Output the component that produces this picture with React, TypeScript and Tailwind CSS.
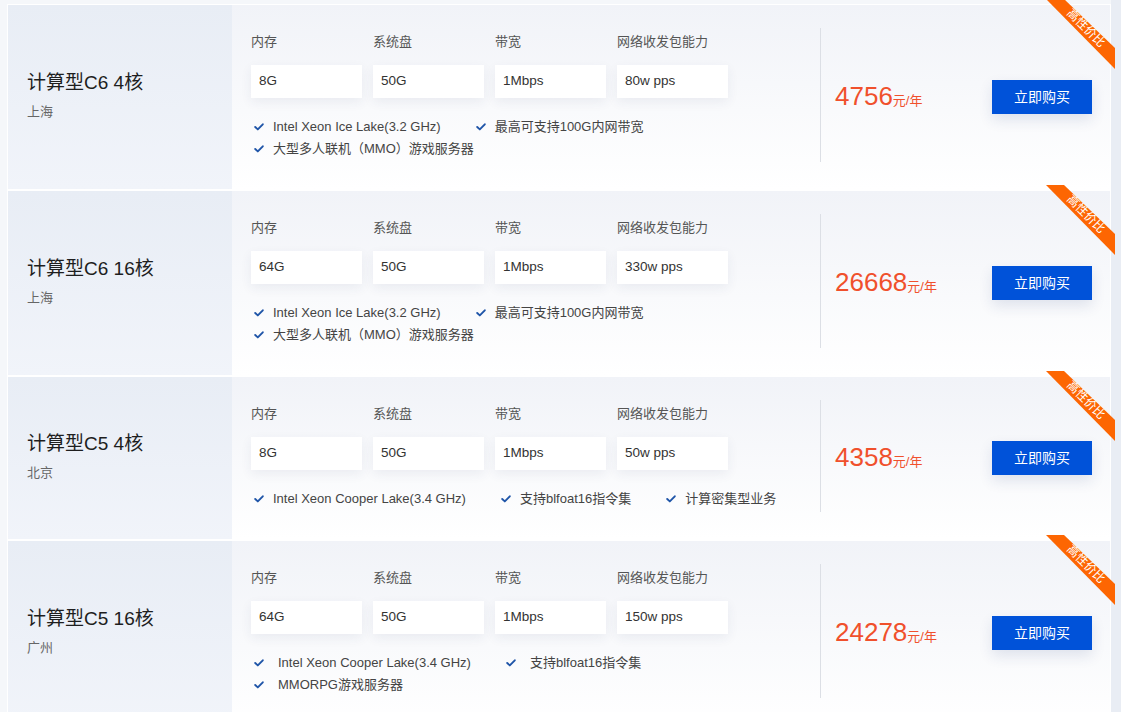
import React from "react";

type Card = {
  title: string;
  region: string;
  specs: string[];
  rows: string[][];
  price: string;
  wideGap?: boolean;
};

const labels = ["内存", "系统盘", "带宽", "网络收发包能力"];

const cards: Card[] = [
  {
    title: "计算型C6 4核",
    region: "上海",
    specs: ["8G", "50G", "1Mbps", "80w pps"],
    rows: [["Intel Xeon Ice Lake(3.2 GHz)", "最高可支持100G内网带宽"], ["大型多人联机（MMO）游戏服务器"]],
    price: "4756",
  },
  {
    title: "计算型C6 16核",
    region: "上海",
    specs: ["64G", "50G", "1Mbps", "330w pps"],
    rows: [["Intel Xeon Ice Lake(3.2 GHz)", "最高可支持100G内网带宽"], ["大型多人联机（MMO）游戏服务器"]],
    price: "26668",
  },
  {
    title: "计算型C5 4核",
    region: "北京",
    specs: ["8G", "50G", "1Mbps", "50w pps"],
    rows: [["Intel Xeon Cooper Lake(3.4 GHz)", "支持blfoat16指令集", "计算密集型业务"]],
    price: "4358",
  },
  {
    title: "计算型C5 16核",
    region: "广州",
    specs: ["64G", "50G", "1Mbps", "150w pps"],
    rows: [["Intel Xeon Cooper Lake(3.4 GHz)", "支持blfoat16指令集"], ["MMORPG游戏服务器"]],
    price: "24278",
    wideGap: true,
  },
];

function Check() {
  return (
    <svg width="10" height="8" viewBox="0 0 10 8" className="shrink-0">
      <polyline points="1.2,4 3.8,6.4 8.8,1.3" fill="none" stroke="#1f55a8" strokeWidth="1.9" strokeLinecap="round" strokeLinejoin="round" />
    </svg>
  );
}

function Ribbon() {
  return (
    <div className="absolute top-[-6px] right-[-5px] w-[69px] h-[70px] pointer-events-none">
      <svg width="69" height="70" viewBox="0 0 69 70" className="absolute inset-0">
        <polygon points="0,0 18,0 69,49 69,70" fill="#fd6602" />
      </svg>
      <span className="absolute left-[40px] top-[29px] -translate-x-1/2 -translate-y-1/2 rotate-45 whitespace-nowrap text-[12px] leading-none text-white">
        高性价比
      </span>
    </div>
  );
}

function ProductCard({ c }: { c: Card }) {
  return (
    <div className="relative flex border border-white bg-gradient-to-b from-[#f1f3f8] to-[#ffffff]">
      <div className="w-[224px] shrink-0 flex flex-col justify-center pl-[19px] pb-[5px] bg-gradient-to-b from-[#e8edf5] to-[#f1f4fa]">
        <div className="text-[19px] leading-[28px] text-[#1e1e1e]">{c.title}</div>
        <div className="mt-[6px] text-[13px] leading-[18px] text-[#666]">{c.region}</div>
      </div>
      <div className="w-[588px] shrink-0 pl-[19px] pt-[28px] pb-[29px]">
        <div className="grid grid-cols-[111px_111px_111px_111px] gap-x-[11px]">
          {labels.map((l) => (
            <div key={l} className="text-[13px] leading-[18px] text-[#555]">{l}</div>
          ))}
          {c.specs.map((s, i) => (
            <div
              key={i}
              className="mt-[14px] h-[33px] flex items-center pl-[8px] bg-white text-[13.5px] text-[#333] shadow-[0_4px_12px_rgba(40,60,100,0.07)]"
            >
              {s}
            </div>
          ))}
        </div>
        <div className="mt-[18px] flex flex-col">
          {c.rows.map((row, ri) => (
            <div key={ri} className="flex h-[22px] items-center gap-x-[32px]">
              {row.map((f) => (
                <div key={f} className={`flex items-center pl-[3px] ${c.wideGap ? "gap-[14px]" : "gap-[9px]"}`}>
                  <Check />
                  <span className="text-[13px] text-[#444] whitespace-nowrap">{f}</span>
                </div>
              ))}
            </div>
          ))}
        </div>
      </div>
      <div className="flex-1 mt-[23px] mb-[27px] border-l border-[#dcdfe5] flex items-center justify-between pl-[14px] pr-[18px] pt-[4px]">
        <div className="flex items-baseline text-[#f0502c]">
          <span className="text-[26px] leading-none">{c.price}</span>
          <span className="text-[13px]">元/年</span>
        </div>
        <button className="w-[100px] h-[34px] bg-[#0052d9] text-white text-[14px] shadow-[0_6px_14px_rgba(30,60,120,0.12)]">
          立即购买
        </button>
      </div>
      <Ribbon />
    </div>
  );
}

export default function App() {
  return (
    <div
      className="flex min-h-[712px] bg-[#e9edf4] overflow-hidden"
      style={{ fontFamily: '"Liberation Sans", "Noto Sans CJK SC", sans-serif' }}
    >
      <div className="w-[1111px] shrink-0 pl-[7px] pt-[4px] bg-[#f5f7fa]">
        {cards.map((c, i) => (
          <ProductCard key={i} c={c} />
        ))}
      </div>
      <div className="flex-1" />
    </div>
  );
}
